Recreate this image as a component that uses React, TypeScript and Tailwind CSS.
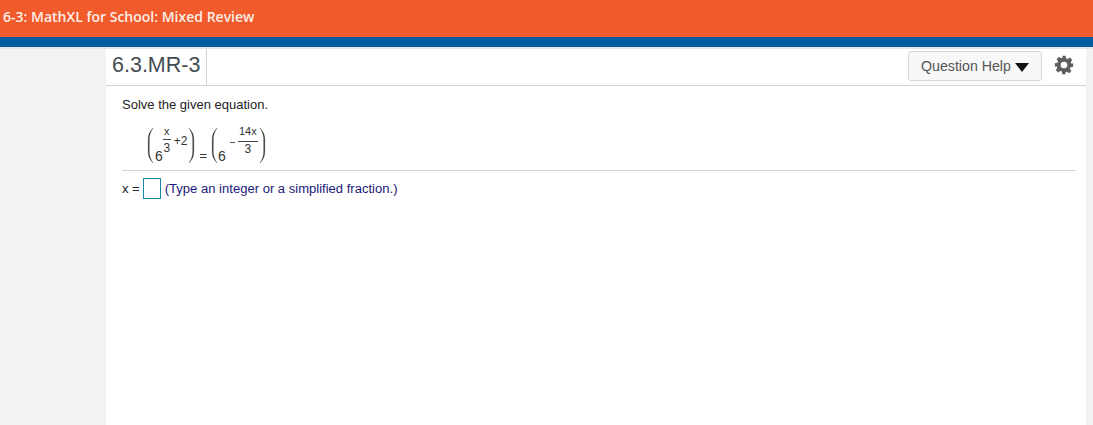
function Paren({ flip = false, className = "" }: { flip?: boolean; className?: string }) {
  return (
    <svg width="7" height="37" viewBox="0 0 7 37" className={className} style={flip ? { transform: "scaleX(-1)" } : undefined}>
      <path d="M6 1 C2.6 4.5 1.2 8 1.2 12 V25 C1.2 29 2.6 32.5 6 36 C3.6 32 2.3 29 2.3 25 V12 C2.3 8 3.6 5 6 1 Z" fill="#333" stroke="#333" strokeWidth="0.3" />
    </svg>
  );
}

export default function App() {
  return (
    <div className="w-[1093px] h-[425px] overflow-hidden bg-[#f2f2f2] flex flex-col font-['Liberation_Sans',Arial,sans-serif]">
      <div className="h-[37px] shrink-0 bg-[#f15a2a] pl-[3px] pt-[7px] font-['Open_Sans',sans-serif] font-semibold text-[14px] leading-[19px] text-[#fdeee8]">
        6-3: MathXL for School: Mixed Review
      </div>
      <div className="h-[10px] shrink-0 bg-[#005c9e]" />
      <div className="h-[2px] shrink-0 bg-[#e4e4e4]" />
      <div className="flex-1 ml-[106px] mr-[7px] bg-white flex flex-col">
        <div className="h-[37px] shrink-0 border-b border-[#d4d4d4] flex items-stretch justify-between">
          <div className="w-[101px] border-r border-[#c9d4dc] pl-[6px] text-[21.5px] leading-[32px] text-[#444c52]">6.3.MR-3</div>
          <div className="flex items-start gap-[12px] pt-[2px] pr-[12px]">
            <div className="w-[134px] h-[30px] border border-[#d6d6d6] rounded-[3px] bg-[#f8f8f8] flex items-center pl-[12px] pt-[2px] gap-[4px] text-[14.2px] text-[#555]">
              <span>Question Help</span>
              <svg width="14" height="9" viewBox="0 0 14 9"><path d="M0 0 H14 L7 9 Z" fill="#111" /></svg>
            </div>
            <svg width="20" height="20" viewBox="0 0 24 24" className="mt-[4px]">
              <path fill="#5f5f5f" fillRule="evenodd" d="M10 1h4l.6 3.1 1.9.8 2.6-1.8 2.8 2.8-1.8 2.6.8 1.9L23 10v4l-3.1.6-.8 1.9 1.8 2.6-2.8 2.8-2.6-1.8-1.9.8L14 23h-4l-.6-3.1-1.9-.8-2.6 1.8-2.8-2.8 1.8-2.6-.8-1.9L1 14v-4l3.1-.6.8-1.9-1.8-2.6 2.8-2.8 2.6 1.8 1.9-.8L10 1Zm2 7a4 4 0 1 0 0 8 4 4 0 0 0 0-8Z" />
            </svg>
          </div>
        </div>
        <div className="pl-[16px] pr-[10px] text-[#222] text-[13px]">
          <div className="pt-[10px] leading-[17px] text-[13px]">Solve the given equation.</div>
          <div className="h-[58px] border-b border-[#d4d4d4] pl-[25px] pt-[12px] flex items-start text-[#333]">
            <Paren className="mt-[2px]" />
            <span className="text-[14px] leading-[14px] mt-[24px] ml-[1px]">6</span>
            <span className="flex flex-col items-center w-[8px] mt-[1px] text-[11px] leading-[11px]">
              <span>x</span>
              <span className="w-[8px] h-px bg-[#444] mt-[2px] mb-[3px]" />
              <span className="text-[12px]">3</span>
            </span>
            <span className="text-[12px] leading-[11px] mt-[11px] ml-[3px]">+2</span>
            <Paren flip className="mt-[2px] ml-[1px]" />
            <span className="text-[13px] leading-[12px] mt-[25px] ml-[4px]">=</span>
            <Paren className="mt-[2px] ml-[4px]" />
            <span className="text-[14px] leading-[14px] mt-[24px]">6</span>
            <span className="w-[5px] h-px bg-[#555] mt-[17px] ml-[4px]" />
            <span className="flex flex-col items-center w-[20px] ml-[3px] mt-[1px] text-[11px] leading-[11px]">
              <span>14x</span>
              <span className="w-[20px] h-px bg-[#444] mt-[4px] mb-[2px]" />
              <span className="text-[12px]">3</span>
            </span>
            <Paren flip className="mt-[2px] ml-[1px]" />
          </div>
          <div className="flex items-center pt-[6px] text-[13px] leading-[21px]">
            <span>x =</span>
            <span className="w-[18px] h-[21px] border border-[#1b87a8] ml-[3px]" />
            <span className="ml-[4px] mt-[1px] text-[13.05px] text-[#1a1a7a]">(Type an integer or a simplified fraction.)</span>
          </div>
        </div>
      </div>
    </div>
  );
}
